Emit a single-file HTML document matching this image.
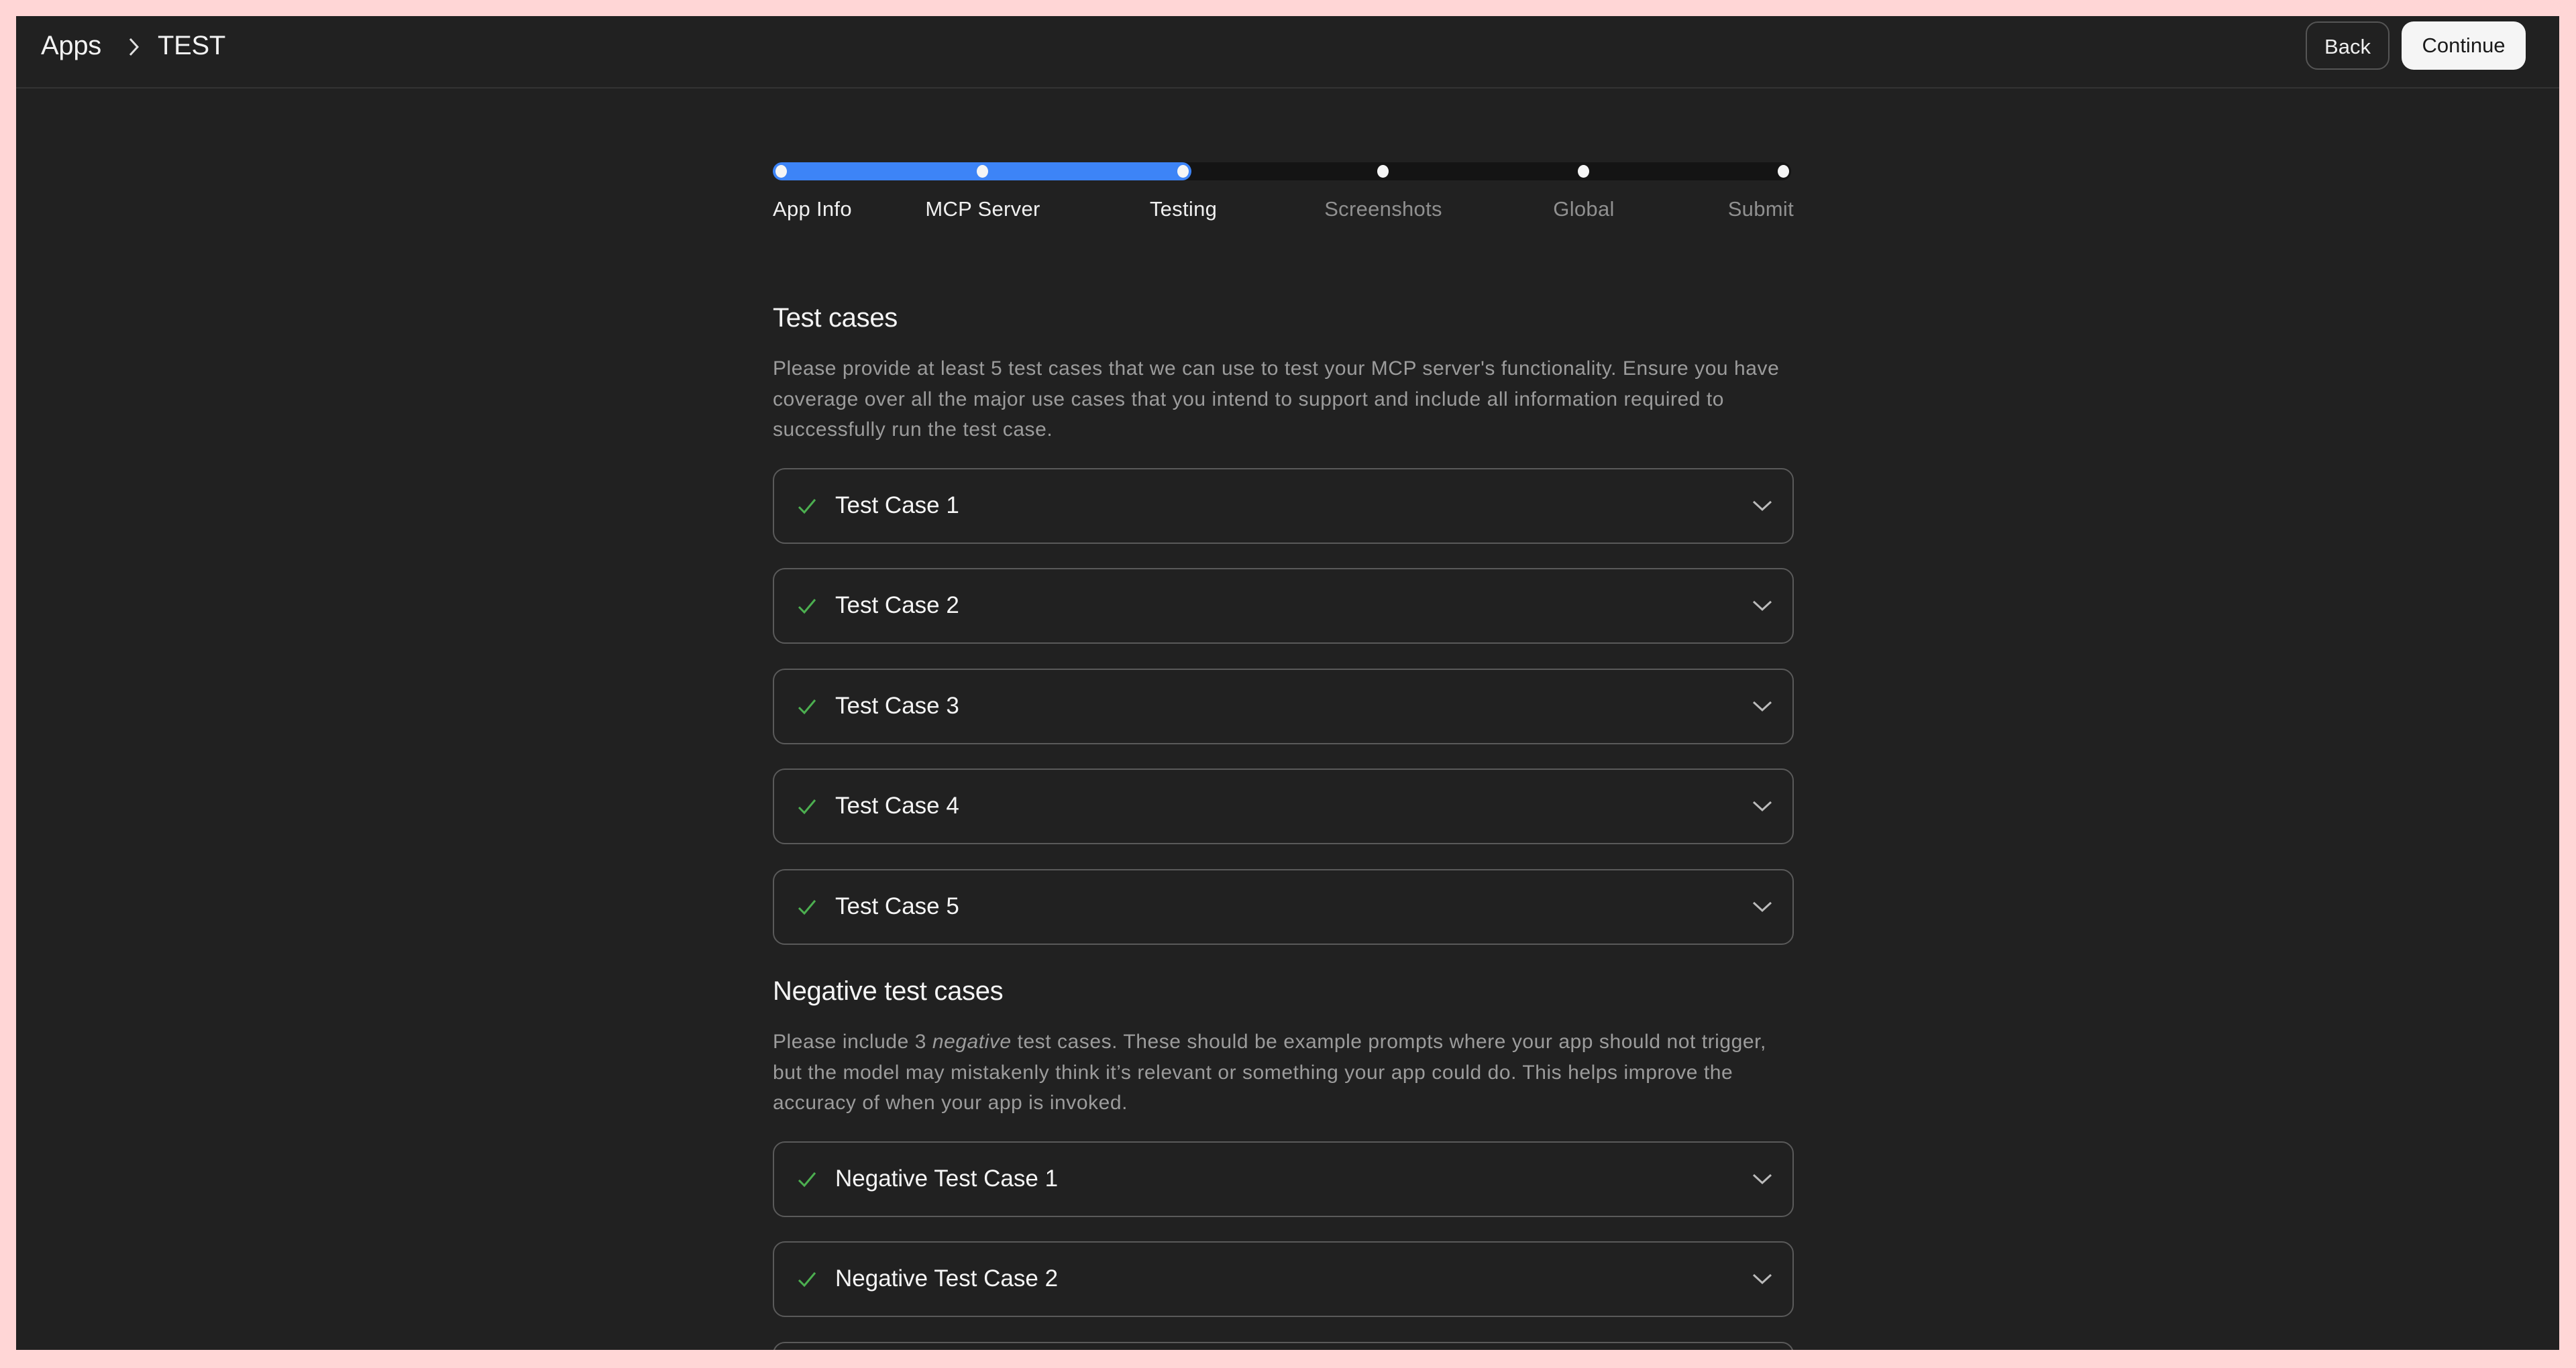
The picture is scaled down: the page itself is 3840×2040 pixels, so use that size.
<!DOCTYPE html>
<html><head><meta charset="utf-8"><style>
*{margin:0;padding:0;box-sizing:border-box}
html,body{width:3840px;height:2040px;background:#ffd6d6;overflow:hidden;font-family:"Liberation Sans",sans-serif}
.app{position:absolute;left:24px;top:24px;width:3791px;height:1989px;background:#212121;overflow:hidden}
.hdr{position:absolute;left:0;top:0;right:0;height:108px;border-bottom:2px solid #333}
.crumb{position:absolute;left:37px;top:22px;font-size:40px;color:#f2f2f2;letter-spacing:-0.3px}
.crumb svg{position:absolute;left:125px;top:6px}
.btn{position:absolute;top:8px;height:72px;border-radius:18px;font-size:31px;line-height:72px;text-align:center}
.back{left:3413px;width:125px;border:2px solid #555;color:#f0f0f0}
.cont{left:3556px;width:185px;background:#f5f5f5;color:#1a1a1a}
.abs{position:absolute}
.track{left:1128px;top:218px;width:1518px;height:27px;border-radius:14px;background:#141414}
.fill{left:1128px;top:218px;width:624px;height:27px;border-radius:14px;background:#3d84f7}
.dot{width:17px;height:19px;border-radius:50%;background:#f5f5f5;top:222px}
.lbl{top:270px;font-size:31px;color:#f0f0f0;white-space:nowrap;letter-spacing:0.3px}
.lbl.g{color:#909090}
h2{position:absolute;left:1128px;font-size:40px;font-weight:normal;color:#f5f5f5;letter-spacing:-0.3px}
p{position:absolute;left:1128px;width:1600px;font-size:30px;line-height:45.5px;color:#9c9c9c;white-space:nowrap;letter-spacing:0.55px}
.card{position:absolute;left:1128px;width:1522px;height:113px;border:2px solid #5a5a5a;border-radius:18px}
.card .t{position:absolute;left:91px;top:34px;font-size:35px;color:#f5f5f5}
.card .ck{position:absolute;left:34px;top:40px}
.card .cv{position:absolute;left:1458px;top:45px}
</style></head><body><div class="app">
<div class="hdr">
<div class="crumb">Apps<svg width="26" height="36" viewBox="0 0 26 36"><path d="M8 6 L19 18 L8 30" fill="none" stroke="#e0e0e0" stroke-width="3"/></svg><span style="position:absolute;left:174px;top:0">TEST</span></div>
<div class="btn back">Back</div>
<div class="btn cont">Continue</div>
</div>
<div class="abs track"></div><div class="abs fill"></div>
<div class="abs dot" style="left:1132px"></div>
<div class="abs dot" style="left:1432px"></div>
<div class="abs dot" style="left:1731px"></div>
<div class="abs dot" style="left:2029px"></div>
<div class="abs dot" style="left:2328px"></div>
<div class="abs dot" style="left:2626px"></div>
<div class="abs lbl" style="left:1128px">App Info</div>
<div class="abs lbl" style="left:1441px;transform:translateX(-50%)">MCP Server</div>
<div class="abs lbl" style="left:1740px;transform:translateX(-50%)">Testing</div>
<div class="abs lbl g" style="left:2038px;transform:translateX(-50%)">Screenshots</div>
<div class="abs lbl g" style="left:2337px;transform:translateX(-50%)">Global</div>
<div class="abs lbl g" style="left:2650px;transform:translateX(-100%)">Submit</div>

<h2 style="top:428px">Test cases</h2>
<p style="top:503px">Please provide at least 5 test cases that we can use to test your MCP server's functionality. Ensure you have<br>coverage over all the major use cases that you intend to support and include all information required to<br>successfully run the test case.</p>

<div class="card" style="top:674px"><svg class="ck" width="30" height="30" viewBox="0 0 30 30"><path d="M3 16 L11 24 L27 5" fill="none" stroke="#4caf50" stroke-width="3"/></svg><div class="t">Test Case 1</div><svg class="cv" width="30" height="18" viewBox="0 0 30 18"><path d="M2 3 L15 15 L28 3" fill="none" stroke="#bbb" stroke-width="3"/></svg></div>
<div class="card" style="top:823px"><svg class="ck" width="30" height="30" viewBox="0 0 30 30"><path d="M3 16 L11 24 L27 5" fill="none" stroke="#4caf50" stroke-width="3"/></svg><div class="t">Test Case 2</div><svg class="cv" width="30" height="18" viewBox="0 0 30 18"><path d="M2 3 L15 15 L28 3" fill="none" stroke="#bbb" stroke-width="3"/></svg></div>
<div class="card" style="top:973px"><svg class="ck" width="30" height="30" viewBox="0 0 30 30"><path d="M3 16 L11 24 L27 5" fill="none" stroke="#4caf50" stroke-width="3"/></svg><div class="t">Test Case 3</div><svg class="cv" width="30" height="18" viewBox="0 0 30 18"><path d="M2 3 L15 15 L28 3" fill="none" stroke="#bbb" stroke-width="3"/></svg></div>
<div class="card" style="top:1122px"><svg class="ck" width="30" height="30" viewBox="0 0 30 30"><path d="M3 16 L11 24 L27 5" fill="none" stroke="#4caf50" stroke-width="3"/></svg><div class="t">Test Case 4</div><svg class="cv" width="30" height="18" viewBox="0 0 30 18"><path d="M2 3 L15 15 L28 3" fill="none" stroke="#bbb" stroke-width="3"/></svg></div>
<div class="card" style="top:1272px"><svg class="ck" width="30" height="30" viewBox="0 0 30 30"><path d="M3 16 L11 24 L27 5" fill="none" stroke="#4caf50" stroke-width="3"/></svg><div class="t">Test Case 5</div><svg class="cv" width="30" height="18" viewBox="0 0 30 18"><path d="M2 3 L15 15 L28 3" fill="none" stroke="#bbb" stroke-width="3"/></svg></div>

<h2 style="top:1432px">Negative test cases</h2>
<p style="top:1507px">Please include 3 <i>negative</i> test cases. These should be example prompts where your app should not trigger,<br>but the model may mistakenly think it’s relevant or something your app could do. This helps improve the<br>accuracy of when your app is invoked.</p>

<div class="card" style="top:1678px"><svg class="ck" width="30" height="30" viewBox="0 0 30 30"><path d="M3 16 L11 24 L27 5" fill="none" stroke="#4caf50" stroke-width="3"/></svg><div class="t">Negative Test Case 1</div><svg class="cv" width="30" height="18" viewBox="0 0 30 18"><path d="M2 3 L15 15 L28 3" fill="none" stroke="#bbb" stroke-width="3"/></svg></div>
<div class="card" style="top:1827px"><svg class="ck" width="30" height="30" viewBox="0 0 30 30"><path d="M3 16 L11 24 L27 5" fill="none" stroke="#4caf50" stroke-width="3"/></svg><div class="t">Negative Test Case 2</div><svg class="cv" width="30" height="18" viewBox="0 0 30 18"><path d="M2 3 L15 15 L28 3" fill="none" stroke="#bbb" stroke-width="3"/></svg></div>
<div class="card" style="top:1977px"></div>
</div></body></html>
